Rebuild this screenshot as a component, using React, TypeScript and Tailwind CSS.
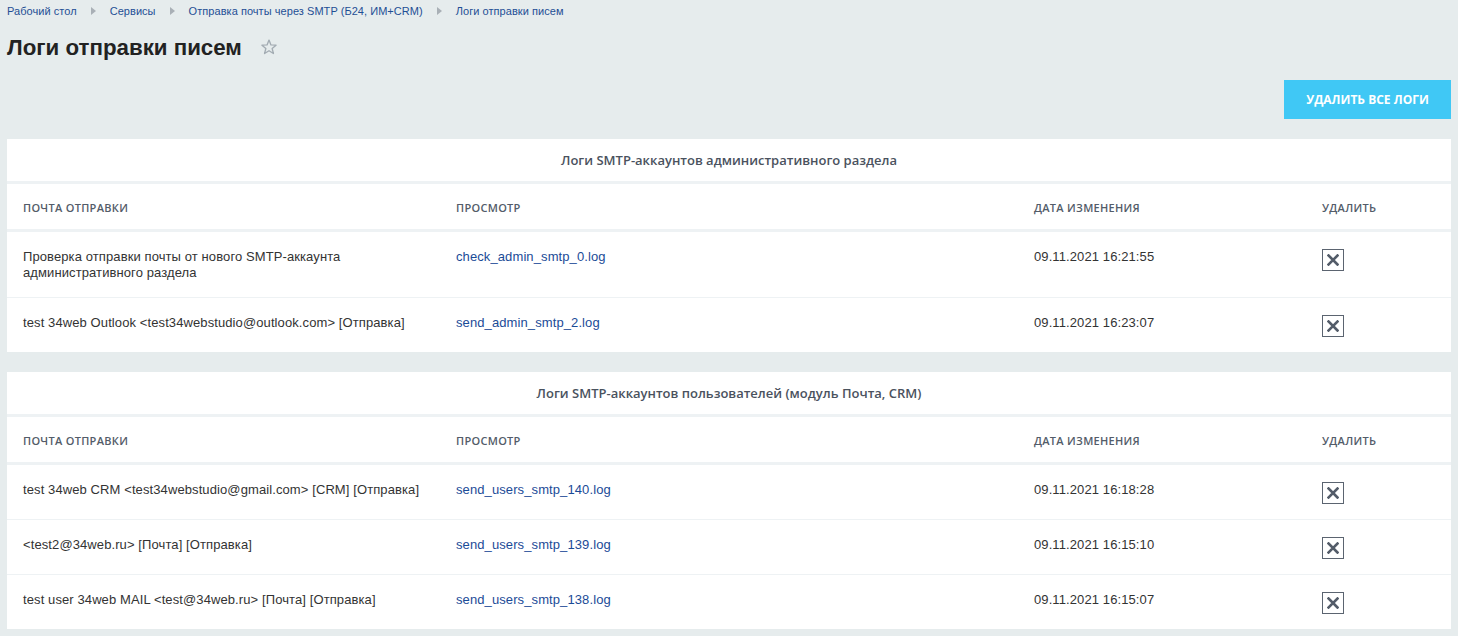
import React from "react";

const helv = { fontFamily: '"Liberation Sans", Arial, sans-serif' };

function Crumb({ text, last }: { text: string; last?: boolean }) {
  return (
    <>
      <span className="text-[#1f4f95] text-[11px] leading-[14px] tracking-[0.05px]">{text}</span>
      {!last && (
        <span className="mx-[14px] inline-flex items-center">
          <svg width="5" height="8" viewBox="0 0 5 8">
            <path d="M0 0 L5 4 L0 8 Z" fill="#a9b0b6" />
          </svg>
        </span>
      )}
    </>
  );
}

function DelIcon() {
  return (
    <div className="w-[22px] h-[22px] border border-[#5b6470] flex items-center justify-center bg-white">
      <svg width="12" height="12" viewBox="0 0 12 12">
        <path d="M1.5 1.5 L10.5 10.5 M10.5 1.5 L1.5 10.5" stroke="#535c69" strokeWidth="2.6" strokeLinecap="square" />
      </svg>
    </div>
  );
}

type Row = { from: React.ReactNode; file: string; date: string };

function Panel({ title, rows }: { title: string; rows: Row[] }) {
  const head = "text-[11px] leading-[15px] font-semibold uppercase tracking-[0.3px] text-[#535c69] px-4 pt-[16px]";
  return (
    <div className="bg-white">
      <div
        className="h-[42px] flex items-center justify-center pt-[2px] text-[13px] font-semibold text-[#4a525e]"
        style={{ fontFamily: '"Open Sans", sans-serif' }}
      >
        {title}
      </div>
      <div className="h-[3px] bg-[#eef2f4]" />
      <div
        className="grid grid-cols-[433px_578px_288px_1fr] h-[45px] items-start"
        style={{ fontFamily: '"Open Sans", sans-serif' }}
      >
        <div className={head}>Почта отправки</div>
        <div className={head}>Просмотр</div>
        <div className={head}>Дата изменения</div>
        <div className={head}>Удалить</div>
      </div>
      <div className="h-[3px] bg-[#eef2f4]" />
      {rows.map((r, i) => (
        <div key={i}>
          {i > 0 && <div className="h-px bg-[#eef2f4]" />}
          <div
            className="grid grid-cols-[433px_578px_288px_1fr] text-[13px] leading-[16px] text-[#333] tracking-[0.1px]"
            style={helv}
          >
            <div className="px-4 pt-[17px] pb-4">{r.from}</div>
            <div className="px-4 pt-[17px] pb-4">
              <span className="text-[#1b4b97]">{r.file}</span>
            </div>
            <div className="px-4 pt-[17px] pb-4">{r.date}</div>
            <div className="px-4 pt-[17px] pb-[15px]">
              <DelIcon />
            </div>
          </div>
        </div>
      ))}
    </div>
  );
}

export default function App() {
  return (
    <div className="min-h-[636px] bg-[#e6eced] px-[7px] pt-[4px] pb-[7px]" style={helv}>
      <div className="flex items-center h-[14px]">
        <Crumb text="Рабочий стол" />
        <Crumb text="Сервисы" />
        <Crumb text="Отправка почты через SMTP (Б24, ИМ+CRM)" />
        <Crumb text="Логи отправки писем" last />
      </div>
      <div className="flex items-center mt-[15px] h-[30px]">
        <h1 className="text-[22.3px] font-bold text-[#222] leading-[30px]">Логи отправки писем</h1>
        <svg className="ml-[18px] mt-[-2px]" width="18" height="18" viewBox="0 0 24 24">
          <path
            d="M12 2.8 L14.6 9.2 L21.4 9.6 L16.2 14 L17.9 20.7 L12 17 L6.1 20.7 L7.8 14 L2.6 9.6 L9.4 9.2 Z"
            fill="none"
            stroke="#a3acb3"
            strokeWidth="1.8"
            strokeLinejoin="round"
          />
        </svg>
      </div>
      <div className="flex justify-end mt-[17px]">
        <button
          className="h-[39px] w-[167px] bg-[#40c8f5] text-white text-[12px] font-bold uppercase"
          style={{ fontFamily: '"Open Sans", sans-serif' }}
        >
          Удалить все логи
        </button>
      </div>
      <div className="mt-[20px] flex flex-col gap-[20px]">
        <Panel
          title="Логи SMTP-аккаунтов административного раздела"
          rows={[
            {
              from: (
                <>
                  Проверка отправки почты от нового SMTP-аккаунта
                  <br />
                  административного раздела
                </>
              ),
              file: "check_admin_smtp_0.log",
              date: "09.11.2021 16:21:55",
            },
            {
              from: "test 34web Outlook <test34webstudio@outlook.com> [Отправка]",
              file: "send_admin_smtp_2.log",
              date: "09.11.2021 16:23:07",
            },
          ]}
        />
        <Panel
          title="Логи SMTP-аккаунтов пользователей (модуль Почта, CRM)"
          rows={[
            {
              from: "test 34web CRM <test34webstudio@gmail.com> [CRM] [Отправка]",
              file: "send_users_smtp_140.log",
              date: "09.11.2021 16:18:28",
            },
            {
              from: "<test2@34web.ru> [Почта] [Отправка]",
              file: "send_users_smtp_139.log",
              date: "09.11.2021 16:15:10",
            },
            {
              from: "test user 34web MAIL <test@34web.ru> [Почта] [Отправка]",
              file: "send_users_smtp_138.log",
              date: "09.11.2021 16:15:07",
            },
          ]}
        />
      </div>
    </div>
  );
}
